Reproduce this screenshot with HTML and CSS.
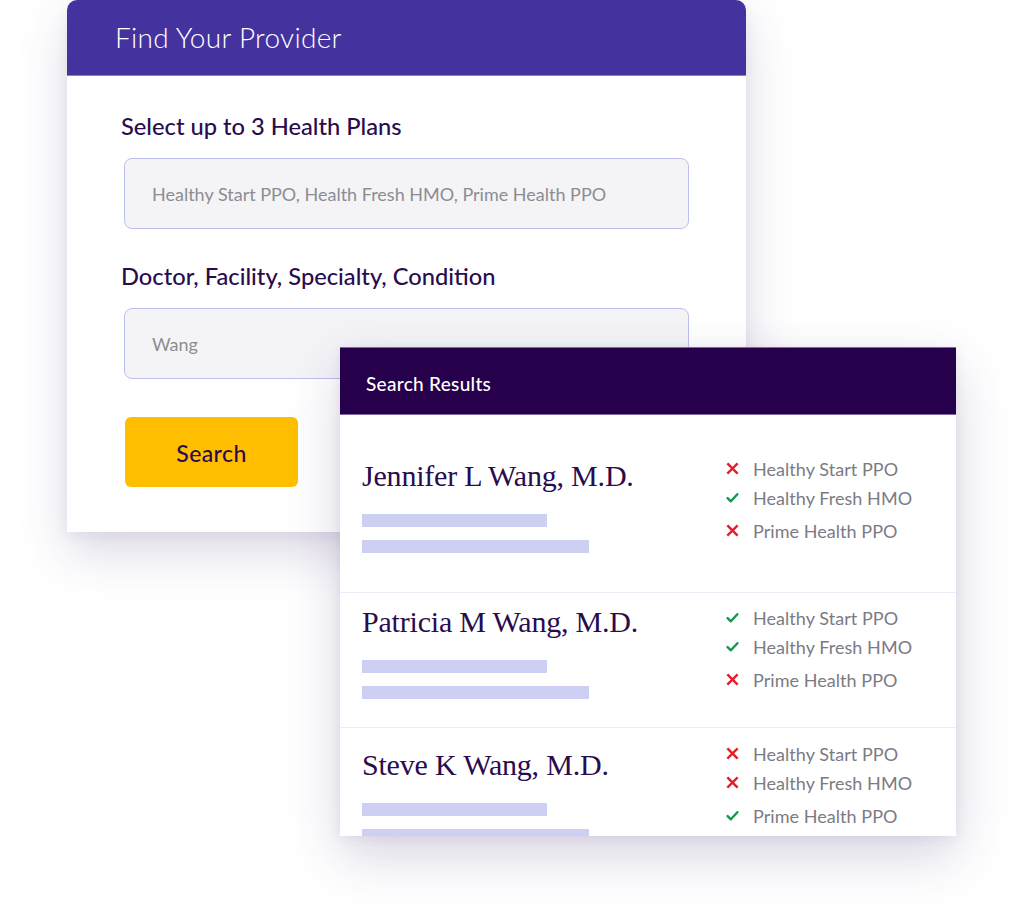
FILE: index.html
```html
<!DOCTYPE html>
<html>
<head>
<meta charset="utf-8">
<link rel="stylesheet" href="styles.css">
</head>
<body>
<div class="canvas">
  <section class="card finder">
    <header class="finder-head">Find Your Provider</header>
    <div class="finder-body">
      <label class="field-label">Select up to 3 Health Plans</label>
      <div class="input">Healthy Start PPO, Health Fresh HMO, Prime Health PPO</div>
      <label class="field-label second">Doctor, Facility, Specialty, Condition</label>
      <div class="input">Wang</div>
      <button class="search-btn">Search</button>
    </div>
  </section>

  <section class="card results">
    <header class="results-head">Search Results</header>
    <div class="row r1">
      <div class="info">
        <div class="name">Jennifer L Wang, M.D.</div>
        <div class="bar short"></div>
        <div class="bar long"></div>
      </div>
      <ul class="plans">
        <li><span class="ic no"><svg viewBox="0 0 12 12"><path d="M2 2L10 10M10 2L2 10"/></svg></span>Healthy Start PPO</li>
        <li><span class="ic yes"><svg viewBox="0 0 12 12"><path d="M1.5 6.5L4.5 9.5L10.5 3"/></svg></span>Healthy Fresh HMO</li>
        <li class="last"><span class="ic no"><svg viewBox="0 0 12 12"><path d="M2 2L10 10M10 2L2 10"/></svg></span>Prime Health PPO</li>
      </ul>
    </div>
    <div class="row r2">
      <div class="info">
        <div class="name">Patricia M Wang, M.D.</div>
        <div class="bar short"></div>
        <div class="bar long"></div>
      </div>
      <ul class="plans">
        <li><span class="ic yes"><svg viewBox="0 0 12 12"><path d="M1.5 6.5L4.5 9.5L10.5 3"/></svg></span>Healthy Start PPO</li>
        <li><span class="ic yes"><svg viewBox="0 0 12 12"><path d="M1.5 6.5L4.5 9.5L10.5 3"/></svg></span>Healthy Fresh HMO</li>
        <li class="last"><span class="ic no"><svg viewBox="0 0 12 12"><path d="M2 2L10 10M10 2L2 10"/></svg></span>Prime Health PPO</li>
      </ul>
    </div>
    <div class="row r3">
      <div class="info">
        <div class="name">Steve K Wang, M.D.</div>
        <div class="bar short"></div>
        <div class="bar long"></div>
      </div>
      <ul class="plans">
        <li><span class="ic no"><svg viewBox="0 0 12 12"><path d="M2 2L10 10M10 2L2 10"/></svg></span>Healthy Start PPO</li>
        <li><span class="ic no"><svg viewBox="0 0 12 12"><path d="M2 2L10 10M10 2L2 10"/></svg></span>Healthy Fresh HMO</li>
        <li class="last"><span class="ic yes"><svg viewBox="0 0 12 12"><path d="M1.5 6.5L4.5 9.5L10.5 3"/></svg></span>Prime Health PPO</li>
      </ul>
    </div>
  </section>
</div>
</body>
</html>
```

FILE: styles.css
```css
* { box-sizing: border-box; }
html, body { margin: 0; padding: 0; background: #ffffff; }
body { font-family: Lato, "Noto Sans", sans-serif; width: 1024px; height: 916px; overflow: hidden; }

.canvas { position: relative; width: 1024px; height: 916px; }

.card { position: absolute; background: #ffffff; }

.finder {
  left: 67px; top: 0; width: 679px; height: 532px;
  border-radius: 10px 10px 0 0;
  box-shadow: 0 20px 50px rgba(60, 40, 110, 0.18), 0 4px 14px rgba(60, 40, 110, 0.06);
}
.finder-head {
  height: 76px; background: #44339f; color: #ffffff;
  border-radius: 10px 10px 0 0;
  font-size: 28px; font-weight: 300; letter-spacing: 0.3px;
  padding: 20px 0 0 48px;
  border-bottom: 1px solid #8a7fc8;
}
.finder-body { padding: 35px 57px 0 57px; display: flex; flex-direction: column; align-items: flex-start; }
.field-label { font-size: 23.7px; font-weight: 500; color: #2a0c4e; line-height: 30px; margin-left: -3px; }
.field-label.second { margin-top: 32px; }
.input {
  margin-top: 17px; width: 565px; height: 71px;
  background: #f4f4f7; border: 1px solid #bcc0ef; border-radius: 8px;
  padding: 0 27px; display: flex; align-items: center;
  font-size: 18px; color: #8c8c92;
}
.search-btn {
  margin-top: 38px; margin-left: 1px; width: 173px; height: 70px;
  background: #ffbf00; border: none; border-radius: 6px;
  font-family: Lato, "Noto Sans", sans-serif; font-size: 23px; font-weight: 500; color: #2a0c4e;
  letter-spacing: 0.4px; padding-top: 3px;
}

.results {
  left: 340px; top: 347px; width: 616px; height: 489px; overflow: hidden;
  box-shadow: 0 20px 50px rgba(60, 40, 110, 0.20), 0 2px 10px rgba(60, 40, 110, 0.08);
}
.results-head {
  height: 68px; background: #26004a; color: #ffffff;
  font-size: 19px; font-weight: 500; letter-spacing: 0.3px; padding: 24px 0 0 26px;
  border-top: 1px solid #7e6a9a; border-bottom: 1px solid #7e6a9a;
}
.row {
  display: grid; grid-template-columns: 364px 1fr;
  padding-left: 22px;
  border-bottom: 1px solid #ececf8;
}
.r1 { height: 178px; padding-top: 42px; }
.r2 { height: 135px; padding-top: 10px; }
.r3 { height: 120px; padding-top: 18px; border-bottom: none; }
.r1 .plans { margin-top: -3px; }
.r2 .plans { margin-top: 0; }
.r3 .plans { margin-top: -7px; }

.name {
  font-family: "Liberation Serif", "Times New Roman", serif; font-size: 30px; color: #2a0c4e;
  line-height: 37px; letter-spacing: -0.2px;
}
.bar { background: #cdd0f3; height: 13px; }
.bar.short { width: 185px; margin-top: 20px; }
.bar.long { width: 227px; margin-top: 13px; }

.plans { list-style: none; margin: 0; padding: 0; }
.plans li {
  display: flex; align-items: center; height: 29px;
  font-size: 18px; color: #7b7b84; letter-spacing: 0.05px;
}
.plans li.last { margin-top: 4px; }
.ic { width: 13px; height: 13px; margin-right: 14px; display: inline-flex; }
.ic svg { width: 13px; height: 13px; fill: none; stroke-width: 2.2; }
.ic.no svg { stroke: #e61e2b; stroke-linecap: square; }
.ic.yes svg { stroke: #12994a; stroke-linecap: round; stroke-linejoin: round; }
```
